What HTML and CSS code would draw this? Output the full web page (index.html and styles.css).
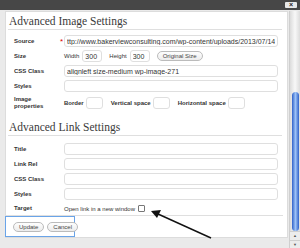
FILE: index.html
```html
<!DOCTYPE html>
<html>
<head>
  <title>Advanced Image Settings</title>
  <link rel="stylesheet" href="styles.css">
</head>
<body>
  <div class="titlebar">
    <span class="close">&#215;</span>
  </div>

  <div class="frame">
    <div class="panel">
      <h2>Advanced Image Settings</h2>

      <div class="rows">
        <div class="row">
          <label>Source</label>
          <span class="req">*</span>
          <input class="wide" type="text" value="ttp://www.bakerviewconsulting.com/wp-content/uploads/2013/07/14">
        </div>
        <div class="row">
          <label>Size</label>
          <span class="txt">Width</span>
          <input class="num" type="text" value="300">
          <span class="txt">Height</span>
          <input class="num" type="text" value="300">
          <button class="pill orig">Original Size</button>
        </div>
        <div class="row">
          <label>CSS Class</label>
          <input class="wide" type="text" value="alignleft size-medium wp-image-271">
        </div>
        <div class="row">
          <label>Styles</label>
          <input class="wide" type="text" value="">
        </div>
        <div class="row props">
          <label>Image<br>properties</label>
          <span class="txt b">Border</span>
          <input class="small" type="text">
          <span class="txt b">Vertical space</span>
          <input class="small" type="text">
          <span class="txt b">Horizontal space</span>
          <input class="small" type="text">
        </div>
      </div>

      <h2 class="second">Advanced Link Settings</h2>

      <div class="rows link-rows">
        <div class="row">
          <label>Title</label>
          <input class="wide" type="text">
        </div>
        <div class="row">
          <label>Link Rel</label>
          <input class="wide" type="text">
        </div>
        <div class="row">
          <label>CSS Class</label>
          <input class="wide" type="text">
        </div>
        <div class="row">
          <label>Styles</label>
          <input class="wide" type="text">
        </div>
        <div class="row target">
          <label>Target</label>
          <span class="txt">Open link in a new window</span>
          <span class="check"></span>
        </div>
      </div>

      <div class="actions">
        <div class="focus">
          <button class="pill">Update</button>
          <button class="pill">Cancel</button>
        </div>
      </div>
    </div>

    <div class="scrollbar">
      <div class="track">
        <div class="thumb"></div>
      </div>
      <div class="arrow">&#9650;</div>
      <div class="arrow">&#9660;</div>
    </div>
  </div>

  <svg class="pointer" width="300" height="248" viewBox="0 0 300 248">
    <line x1="211" y1="238" x2="158" y2="214" stroke="#111" stroke-width="1.4"/>
    <polygon points="151,211 161,210 157,218" fill="#111"/>
  </svg>
</body>
</html>
```

FILE: styles.css
```css
body {
  margin: 0;
  width: 300px;
  height: 248px;
  overflow: hidden;
  background: #eaeaea;
  font-family: "Liberation Sans", Arial, sans-serif;
  color: #333;
  position: relative;
}
.titlebar {
  height: 10px;
  background: #474747;
  position: relative;
}
.close {
  position: absolute;
  right: 3px;
  top: 2px;
  width: 12px;
  height: 6px;
  background: #e8e8e8;
  border-radius: 1px;
  font-size: 7px;
  line-height: 6px;
  text-align: center;
  font-weight: bold;
  color: #222;
}
.frame {
  display: flex;
  height: 238px;
  padding-top: 1px;
  box-sizing: border-box;
}
.panel {
  margin-left: 5px;
  width: 283px;
  height: 227px;
  background: #fff;
  border: 1px solid #dcdcdc;
  box-sizing: border-box;
}
h2 {
  font-family: "Liberation Serif", "Times New Roman", serif;
  font-weight: normal;
  font-size: 11.5px;
  color: #3a3a3a;
  margin: 0 5px 0 2px;
  padding: 3px 0 2px 1px;
  border-bottom: 1px solid #dfdfdf;
  line-height: 12px;
}
h2.second {
  margin-top: 8px;
}
.rows {
  padding: 5px 0 0 8px;
}
.link-rows {
  padding-top: 7px;
}
.row {
  display: flex;
  align-items: center;
  height: 12px;
  margin-bottom: 3px;
  font-size: 6px;
}
.row label {
  width: 50px;
  font-weight: bold;
  color: #333;
  flex: none;
  line-height: 7px;
}
.req {
  color: #d00;
  width: 4px;
  margin-left: -4px;
  font-size: 8px;
}
.txt {
  margin-right: 3px;
  white-space: nowrap;
}
.txt.b {
  font-weight: bold;
  margin-right: 2px;
}
input {
  font-family: "Liberation Sans", Arial, sans-serif;
  font-size: 7px;
  color: #333;
  border: 1px solid #dfdfdf;
  border-radius: 3px;
  background: #fff;
  padding: 0 2px;
  height: 12px;
  box-sizing: border-box;
  margin: 0;
}
input.wide {
  width: 214px;
}
input.num {
  width: 20px;
  margin-right: 7px;
}
input.small {
  width: 17px;
  margin-right: 8px;
}
.props {
  height: 14px;
  margin-top: 4px;
}
.pill {
  font-family: "Liberation Sans", Arial, sans-serif;
  font-size: 6px;
  color: #464646;
  height: 10px;
  padding: 0 5px;
  border: 1px solid #bbb;
  border-radius: 6px;
  background: linear-gradient(#fefefe, #ececec);
  line-height: 8px;
  margin: 0;
}
.target {
  margin-bottom: 0;
  height: 11px;
}
.check {
  width: 5px;
  height: 5px;
  border: 1px solid #777;
  border-radius: 1px;
}
.actions {
  margin: 1px 4px 0 0;
  border-top: 1px solid #dfdfdf;
}
.focus {
  width: 70px;
  height: 21px;
  border: 1px solid #6aa4e8;
  box-sizing: border-box;
  margin-left: -1px;
  display: flex;
  align-items: center;
  gap: 3px;
  padding-left: 7px;
}
.scrollbar {
  margin-left: auto;
  width: 11px;
  display: flex;
  flex-direction: column;
  height: 237px;
}
.track {
  flex: 1;
  background: linear-gradient(90deg, #dcdcdc, #f8f8f8 50%, #dcdcdc);
  border-left: 1px solid #cfcfcf;
  padding-top: 81px;
  box-sizing: border-box;
}
.thumb {
  margin: 0 auto;
  width: 7px;
  height: 139px;
  border-radius: 4px;
  background: linear-gradient(90deg, #2f62c9, #9cc2f7 50%, #2f62c9);
}
.arrow {
  height: 8px;
  font-size: 4px;
  line-height: 8px;
  text-align: center;
  color: #555;
  background: #ececec;
  border-top: 1px solid #cfcfcf;
  border-left: 1px solid #cfcfcf;
}
.pointer {
  position: absolute;
  left: 0;
  top: 0;
}
```
